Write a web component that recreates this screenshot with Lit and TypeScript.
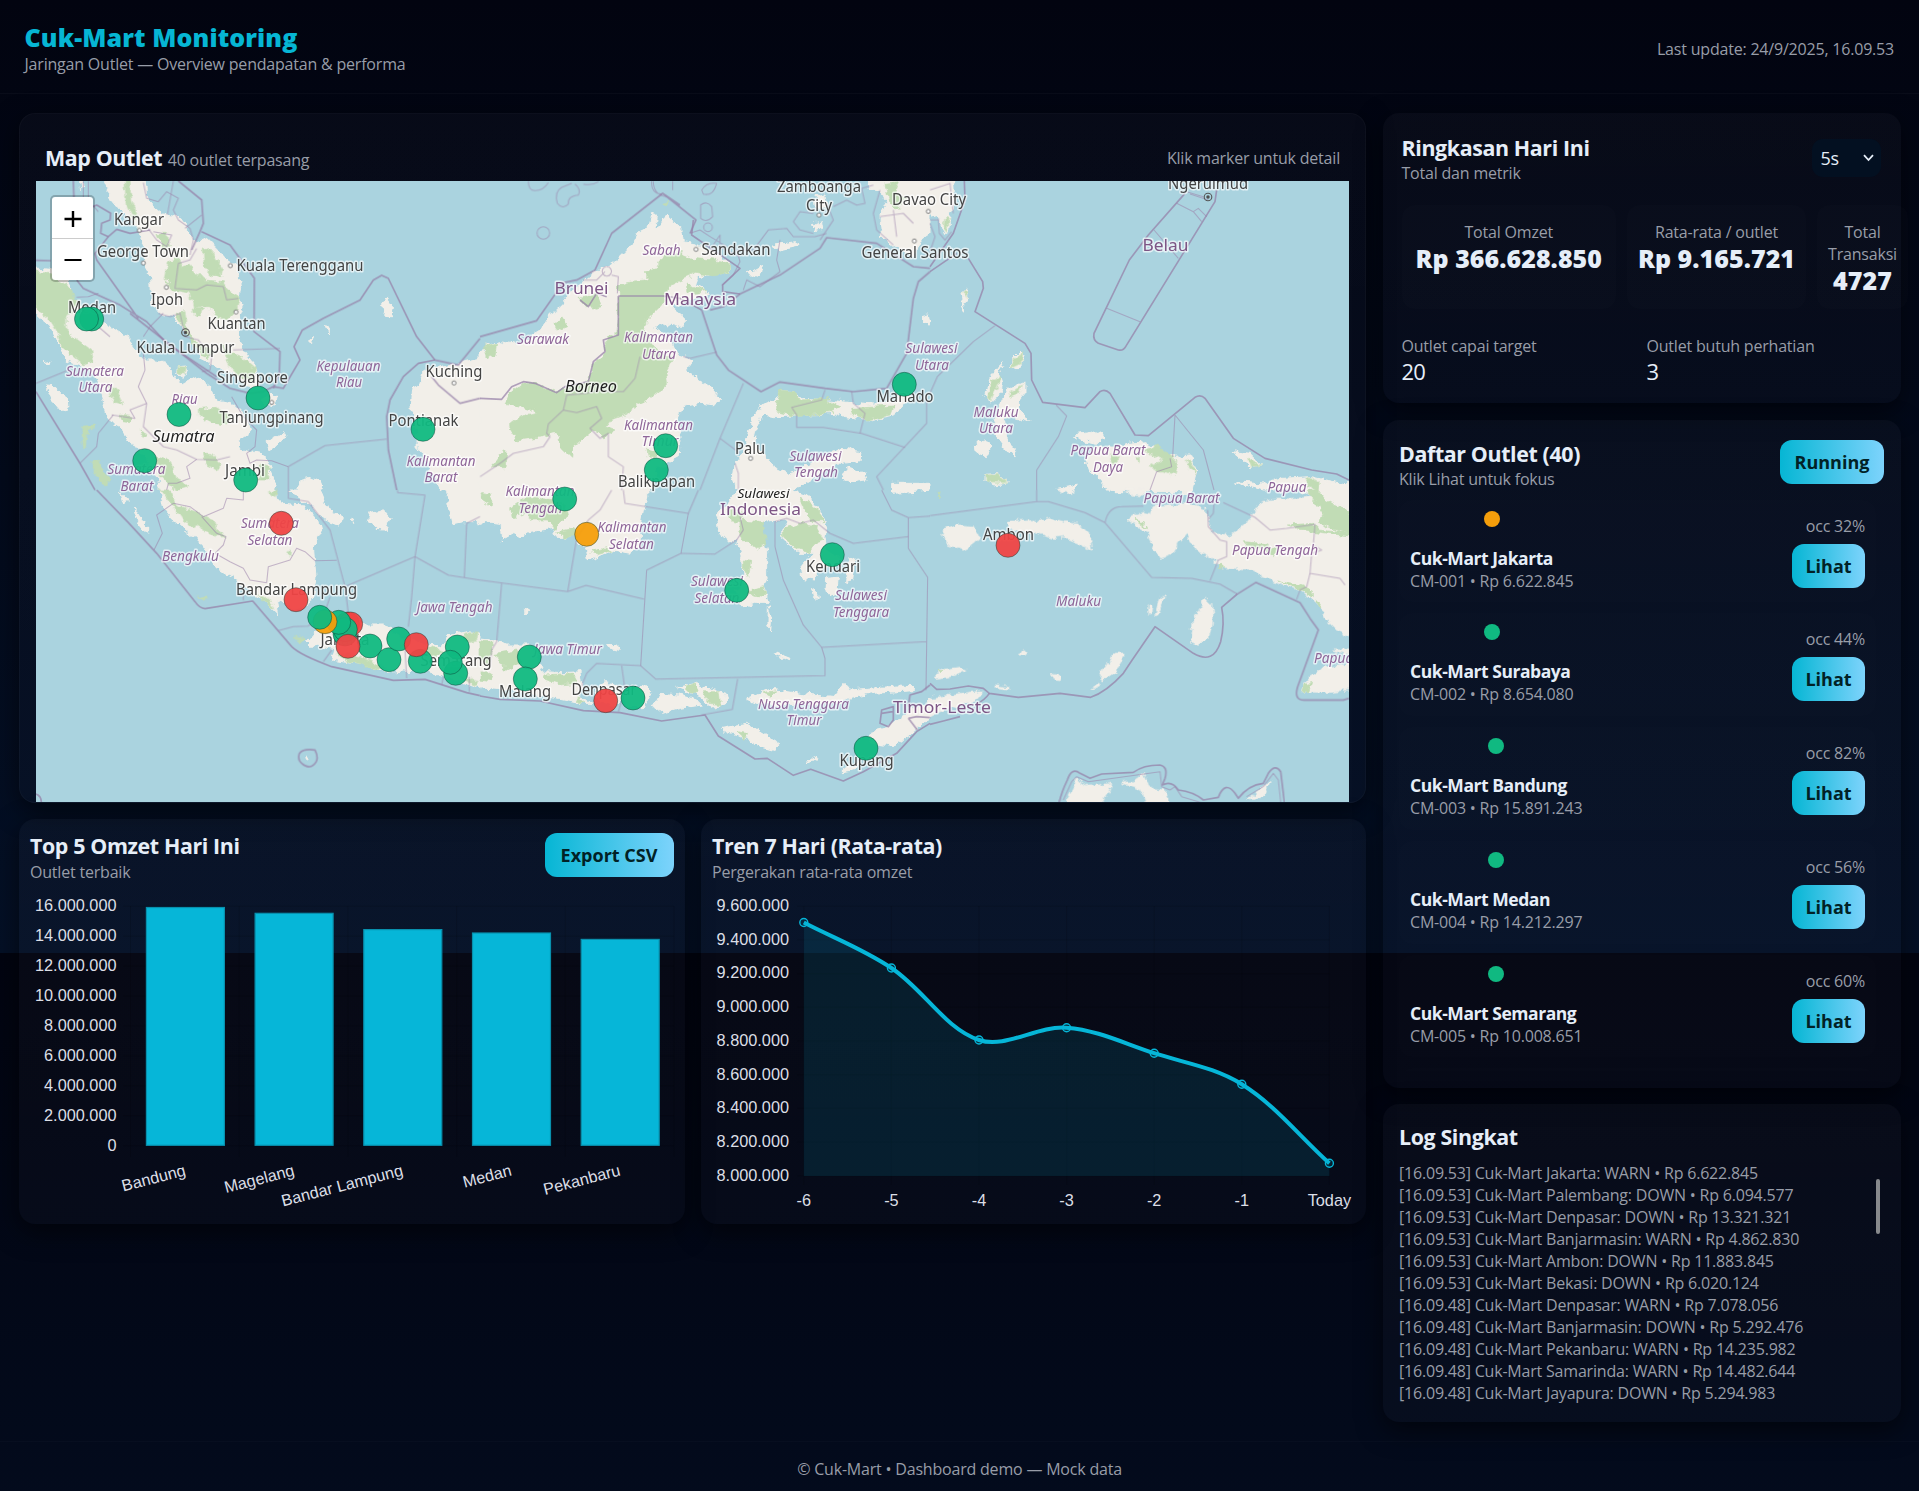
import { LitElement, html, svg, css } from "lit";
import { customElement } from "lit/decorators.js";
import { styleMap } from "lit/directives/style-map.js";

type Pt = [number, number];
type Label = [string, number, number, number, string];

/* Map sheets: each is drawn on its own 3x grid and placed at (x, y). */
interface Sheet {
  x: number;
  y: number;
  land: string[];
  green: string[];
  thin: string[];
  thick: string[];
  towns: Pt[];
}

const SHEETS: Sheet[] = [
  {
    x: 30, y: 170,
    land: [
      "M215,20 L345,20 350,75 370,110 400,135 450,140 465,160 470,185 500,215 530,205 560,235 590,270 620,290 632,350 628,390 640,425 630,450 628,500 640,540 670,580 688,630 680,655 650,650 600,605 560,590 520,570 490,515 460,480 430,440 385,430 365,395 362,320 345,290 340,220 325,180 300,150 270,120 245,90Z",
      "M148,33 L160,33 162,52 152,56Z",
      "M0,293 L60,298 95,312 125,350 122,380 180,430 220,460 260,482 300,505 310,530 340,570 380,570 410,578 430,612 455,645 500,620 540,652 560,690 605,700 655,750 662,785 622,812 640,840 700,852 715,880 735,930 735,960 395,960 385,930 350,870 300,810 270,770 235,750 215,680 205,620 150,585 110,570 90,530 60,470 0,415Z",
      "M445,590 L465,588 472,605 460,622 443,612Z",
      "M48,648 L75,650 112,690 114,720 95,725 65,690Z",
      "M40,578 L60,574 55,588 Z",
      "M690,690 L720,670 742,680 735,710 705,705Z",
      "M708,815 L765,785 768,800 735,830 718,842Z",
      "M810,930 L840,922 870,935 880,960 805,960Z",
      "M1055,400 L1075,388 1090,412 1086,440 1070,440 1058,425Z",
      "M838,505 L850,498 845,518Z",
      "M885,470 L898,472 893,492Z",
      "M1180,600 L1205,620 1240,655 1290,700 1350,690 1350,960 1235,960 1200,900 1180,850 1158,830 1160,750 1140,715 1145,655 1168,645Z",
      "M1185,600 L1350,565 1350,690 1290,700 1240,655Z",
    ],
    green: [
      "M0,300 L58,308 82,330 128,360 140,400 110,440 115,490 185,540 190,575 160,585 130,560 95,530 85,490 60,450 0,400Z",
      "M285,25 L300,25 302,90 325,140 312,150 288,100Z",
      "M375,190 L412,190 418,230 400,235Z",
      "M415,275 L445,262 455,290 480,285 520,330 580,335 590,360 630,380 620,420 590,450 560,440 540,410 490,410 480,370 430,360 405,330Z",
      "M520,240 L545,235 560,270 580,300 575,320 545,315 522,285Z",
      "M435,430 L465,425 475,490 545,550 540,570 515,550 480,510Z",
      "M490,410 L520,415 512,440 494,440Z",
      "M575,520 L600,545 635,560 680,600 665,635 620,615 590,570Z",
      "M508,715 L560,712 602,735 590,765 540,758 510,740Z",
      "M235,640 L265,670 278,705 255,700Z",
      "M380,860 L425,875 440,930 480,950 440,960 395,930Z",
      "M520,850 L545,850 572,880 560,900 530,885Z",
      "M690,885 L718,895 715,930 690,930Z",
      "M185,875 L205,870 240,930 230,945 210,935Z",
      "M155,772 L200,768 175,785 170,825 160,830Z",
      "M445,590 L468,592 465,612 448,610Z",
      "M330,780 L350,790 340,805Z",
      "M270,735 L305,740 300,755 278,752Z",
    ],
    thin: [
      "M175,33 V90 L205,125 M160,33 V90 M18,640 L115,600 M150,880 L200,830 205,790 250,735",
      "M430,33 L412,135 M515,135 L465,175 M140,382 L175,380 205,370",
      "M340,38 L350,85 385,95 410,65 445,85 430,120 445,150 480,175 490,210 480,255",
      "M350,170 L380,210 410,230 425,195 370,185",
      "M445,280 L480,270 500,235 M445,280 L435,355 500,360 530,345 580,350 590,390 625,385",
      "M385,430 L420,440 450,430 465,500 505,510 545,560 540,600 515,605",
      "M610,540 L750,535 M340,550 L345,600 325,650 350,700 300,720 315,745 245,735",
      "M350,700 L340,770 400,830 440,840 500,868 560,870 600,860",
      "M605,680 L640,740 680,780 675,830 650,850 660,880 680,870 725,872 775,890",
      "M775,890 L885,827 1070,807 M775,890 V960",
      "M500,868 L470,890 480,925 440,940 415,940 410,960",
      "M205,470 L240,500 M340,500 L360,470 400,430",
    ],
    thick: [
      "M130,33 L132,90 155,125 200,105 242,130 240,150 215,160 212,190 235,200 260,178 300,190 360,180",
      "M235,200 L195,250 200,270 325,445 M18,271 L62,272 M140,330 L160,355 270,405 350,455 410,520 560,620",
      "M18,665 L150,880 195,960",
      "M445,33 L515,90 520,160 510,185 485,240 M515,185 L600,225 673,325 672,485 750,545 748,610 730,655",
      "M300,430 L530,610 600,655 660,670 700,665 730,650 760,655 810,570 792,530 817,480 880,445 990,390 1010,360 1030,330 1055,316 1075,325 1160,500 1215,570",
      "M1215,570 L1165,580 1120,620 1080,690 1070,740 1075,840 1100,960",
      "M1215,570 L1285,585 1350,505 M1205,620 L1225,645 1290,700 1350,685",
    ],
    towns: [[328, 181], [340, 279], [601, 287], [409, 352], [618, 426], [725, 697], [1272, 639]],
  },
  {
    x: 480, y: 170,
    land: [
      "M0,565 L0,550 20,525 60,515 120,525 170,490 210,440 250,400 290,350 340,310 400,280 430,250 460,220 480,180 510,165 515,130 530,135 525,170 545,160 560,130 575,160 605,175 610,215 640,220 700,245 752,280 750,310 700,312 655,320 650,345 685,370 650,382 620,395 570,410 600,430 620,450 600,470 560,460 520,475 570,500 590,550 625,560 640,570 620,600 650,625 690,650 725,690 710,705 660,700 610,710 590,760 600,800 598,860 560,880 530,900 510,960 0,960Z",
      "M775,960 L760,920 765,880 790,850 800,810 815,750 850,700 890,685 905,662 940,665 970,685 1050,690 1120,700 1180,705 1250,690 1270,670 1290,680 1270,710 1240,735 1170,750 1100,740 1060,730 950,738 880,740 850,735 830,770 820,820 850,850 880,890 920,910 960,900 1010,870 1050,850 1090,838 1143,845 1140,875 1080,880 1030,905 980,935 940,960Z",
      "M1085,905 L1110,895 1155,910 1160,930 1120,935 1095,925Z",
      "M1235,940 L1350,940 1350,960 1235,960Z",
      "M1155,20 L1350,20 1350,190 1320,210 1300,260 1240,230 1205,200 1200,140 1220,100 1200,60 1170,55Z",
      "M995,165 L1025,155 1028,175 1005,182Z",
      "M880,225 L950,215 955,228 900,240Z",
      "M805,310 L850,285 848,300 815,322Z",
      "M1005,80 L1035,75 1040,110 1010,115Z",
      "M1325,440 L1345,435 1350,465 1335,460Z",
    ],
    green: [
      "M415,355 L440,335 500,330 500,305 530,295 545,260 600,250 640,265 700,270 752,285 750,308 700,318 650,310 600,330 570,345 555,380 540,410 500,450 490,480 530,540 580,570 555,610 560,650 520,680 480,700 440,730 400,745 380,770 405,780 370,800 340,780 280,830 275,865 240,830 230,790 190,800 110,810 85,770 120,740 175,725 130,710 75,700 90,670 130,637 165,640 230,668 250,655 325,635 345,570 375,545 370,510 410,495 415,440Z",
      "M300,385 L350,370 365,410 345,415 320,408Z",
      "M220,460 L245,445 260,470 235,480Z",
      "M35,890 L70,840 80,850 75,890Z",
      "M620,345 L680,365 650,370 620,362Z",
      "M10,530 L50,520 45,555 20,565Z",
      "M900,660 L945,665 960,690 1040,685 1082,710 1040,730 950,740 890,725 890,700Z",
      "M1115,715 L1240,708 1230,735 1160,750 1120,735Z",
      "M1215,40 L1255,35 1245,65 1280,85 1250,120 1225,90Z",
      "M545,100 L570,95 560,110Z",
      "M500,840 L535,850 525,865 505,860Z",
    ],
    thin: [
      "M145,33 Q145,62 165,62 Q190,62 205,38 M285,42 Q305,60 295,75 Q262,78 265,102 Q248,120 232,100 Q222,65 245,52 L275,40 M310,42 Q335,48 355,35",
      "M171,189 a19,19 0 1 0 38,0 a19,19 0 1 0 -38,0",
      "M520,33 Q520,75 560,80 M515,33 Q512,70 545,72 M578,33 V60 M665,60 Q680,35 710,40 Q700,80 670,72Z",
      "M662,105 Q680,90 695,110 L698,140 Q680,160 662,145Z M671,172 a13,13 0 1 0 26,0 a13,13 0 1 0 -26,0",
      "M630,190 L660,180 690,200 740,230 M700,225 L720,195 720,230 780,260",
      "M725,345 L760,315 780,275 770,240 820,240 865,180 920,175 940,200 1005,200 1040,190 M790,360 L800,330 840,350 900,305 890,270 900,210",
      "M1040,100 L1060,150 1020,210 M1000,130 L960,125 940,155 960,180 1000,190",
      "M1180,45 L1145,55 1155,100 1130,105 1100,90 1060,110",
      "M1200,60 L1180,130 1190,180 1240,225 M1200,140 L1270,130 1300,160 M1240,120 L1250,200",
      "M395,315 L415,320 412,370 M310,330 L350,330 375,305 M380,290 a14,14 0 1 0 1,0",
      "M610,560 L630,565 710,546 M480,560 L465,625 430,665 390,665 360,660 320,670 260,675 250,720 205,762 200,790 210,800 190,830 100,850 60,880 0,920",
      "M250,720 L290,728 350,710 365,745 330,775 360,805 385,790 385,860 430,890 425,960",
      "M790,640 L720,805 660,960 M720,805 L780,850 M1035,660 L1025,690 935,712 950,735 950,772 1030,772 1145,790 1275,832",
      "M1115,665 L1120,700 1155,730 1140,790 M1340,690 V760 L1190,920 1210,960",
      "M775,960 V910 L765,880",
    ],
    thick: [
      "M0,500 L170,452 250,338 290,330 345,300 395,190 548,70 648,150 630,190 M548,70 L600,105",
      "M415,378 H550 L600,385 665,420 M415,378 V495 L370,510 375,545 340,575 325,635 M0,685 L65,688 95,650 130,635 165,640 230,668 255,650 325,635",
      "M665,420 L710,555 745,600 843,665 900,636 1035,655 1120,665 1220,655 1280,550 1300,385 1315,335 1350,305",
      "M690,420 L730,410 780,372 900,315 1020,235 1040,203 1190,220 1300,290 1350,295",
      "M640,150 L635,195 780,295 728,345 728,365 780,372 M300,390 L325,410 350,370 380,380",
    ],
    towns: [[648, 238], [812, 865], [1017, 135], [1303, 213], [1345, 124]],
  },
  {
    x: 930, y: 170,
    land: [
      "M0,20 L70,20 75,100 60,140 55,190 45,195 30,150 0,130Z",
      "M245,565 L270,540 285,560 265,600 245,590Z",
      "M185,615 L220,575 205,600 218,640 210,670 180,700 165,670Z",
      "M215,690 L230,660 285,635 285,670 260,700 300,755 250,740 220,745 230,800 260,860 230,840 200,800 190,760Z",
      "M138,815 L160,808 185,825 170,860 142,850Z",
      "M165,910 L200,908 235,938 195,945 165,930Z",
      "M430,795 L490,785 528,800 500,820 450,810Z",
      "M465,870 L500,830 560,835 600,820 650,815 720,860 780,855 800,900 785,965 540,965 500,920 475,900Z",
      "M905,845 L960,850 995,885 960,890 930,865Z",
      "M910,935 L1000,942 1060,925 1140,920 1275,948 1275,960 1000,960Z",
      "M380,955 L445,942 430,960 385,960Z",
      "M95,365 L110,360 115,385 95,410 105,430Z",
    ],
    green: [
      "M45,140 L55,140 50,190 42,170Z",
      "M98,365 L112,365 110,385Z",
      "M245,570 L278,545 275,580 250,592Z",
      "M185,630 L215,620 180,695 172,685Z",
      "M240,670 L280,645 270,670 245,685Z",
      "M165,912 L200,910 232,938 170,935Z",
      "M640,840 L685,828 725,860 745,880 735,915 690,905 660,890 700,870Z",
      "M765,870 L790,880 798,915Z",
      "M540,855 L565,860 560,880 540,875Z",
      "M955,865 L995,885 965,890Z",
      "M1135,920 L1168,935 1165,960 1130,950Z",
      "M620,865 L632,868 630,878Z",
    ],
    thin: [
      "M0,60 L60,40 70,130 M0,160 L15,200 0,245 M25,145 L28,190 45,210 65,185 M0,150 L25,150",
      "M130,515 L22,620 0,670 M130,515 L195,467",
      "M378,705 L410,738 385,800 320,900 V960",
      "M530,415 L630,455 M672,180 L745,265 M740,100 L790,125 815,155 M790,125 L805,115 830,140 M770,65 L820,80 M780,72 L835,90",
      "M735,735 L728,860 M735,735 L820,840 852,960",
      "M660,960 L680,905 725,890 720,865",
    ],
    thick: [
      "M103,33 L105,90 70,190 0,290 M115,265 L158,335 160,355 135,425 285,520 303,550 305,630 338,697 465,713 510,665 Q525,655 540,670 L615,795 655,797 795,682 Q812,672 825,685 L910,805 1005,865 1145,900 1220,912 1257,930",
      "M765,70 L655,195 598,270 492,490 Q488,510 505,520 L565,540 Q580,543 587,530 L855,95 860,60",
      "M0,305 L80,250",
    ],
    towns: [],
  },
  {
    x: 30, y: 490,
    land: [
      "M390,0 L735,0 740,30 760,40 820,45 870,100 875,120 850,170 858,260 850,330 820,350 790,360 740,330 745,375 700,330 650,300 620,270 560,235 520,170 490,140 430,90 400,50Z",
      "M775,0 L870,0 890,50 940,80 930,110 880,90 850,50 800,20Z",
      "M1020,70 L1060,62 1080,85 1065,120 1035,118 1015,95Z",
      "M960,95 l10,-5 l2,10z",
      "M270,10 L295,35 280,40Z",
      "M310,55 L350,105 350,130 325,100Z",
      "M1250,0 L1350,0 1350,95 1300,95 1268,102 1255,50Z",
      "M830,455 L860,420 880,390 960,380 1010,405 1060,405 1110,440 1230,470 1260,435 1310,425 1350,430 1350,595 1270,570 1200,545 1120,540 1060,545 1000,525 905,510 915,475 840,465Z",
      "M830,798 L843,803 832,808Z",
    ],
    green: [
      "M390,0 L420,0 440,45 500,65 560,100 565,125 590,140 555,140 500,110 460,95 430,50Z",
      "M505,318 L530,322 520,335Z",
      "M680,310 L715,325 735,360 700,335Z",
      "M770,180 L785,178 782,198Z",
      "M715,5 L745,0 735,20Z",
      "M795,440 L830,450 815,460Z",
      "M920,490 L990,500 1080,540 1040,538 950,515Z",
      "M1300,430 L1345,425 1340,450 1310,455Z",
      "M1180,470 L1240,480 1220,500 1180,490Z",
      "M1290,560 L1345,575 1340,590Z",
    ],
    thin: [
      "M430,40 L380,75 397,130 372,180 M430,40 L480,50 520,80 580,55 590,25 640,30 640,0",
      "M515,80 L560,130 588,140 580,165 555,190 600,215 640,235 660,270 710,278 M710,278 L715,230 780,210 800,175 825,185 855,212 920,211",
      "M775,0 V25 L835,35 900,120 945,290 955,370 M945,290 L1155,200 1255,255 1350,270 M1155,200 L1185,15 1103,8 V0",
      "M1155,200 L1145,320 1135,410 M1303,262 L1310,100 1350,80",
      "M640,330 L640,315 M745,422 L790,410 835,408 890,350 900,320 M880,515 L905,480",
      "M1125,480 L1130,565 M1235,585 L1240,560 M1318,605 V560",
    ],
    thick: [
      "M200,0 L295,98 380,190 495,335 Q508,355 525,356 L668,333 785,470 Q810,495 905,530 L1090,571 1185,568 1310,608 1350,617",
      "M808,790 Q820,775 855,780 Q870,810 850,825 Q835,838 815,820 Q802,810 808,790Z",
      "M18,912 Q34,918 34,936",
    ],
    towns: [],
  },
  {
    x: 480, y: 490,
    land: [
      "M0,0 L505,0 500,40 490,60 482,110 480,170 450,190 400,180 360,197 325,210 320,180 300,160 285,130 255,145 230,145 220,115 150,125 120,140 100,130 65,150 60,100 20,95 0,100Z",
      "M770,0 L930,0 985,20 1010,55 1042,100 1035,140 1040,180 1085,200 1060,230 1010,240 1005,270 965,265 962,235 1000,190 960,190 910,150 905,120 930,90 870,92 845,95 850,150 860,180 860,260 850,290 865,340 830,340 790,350 770,300 790,280 785,200 770,150 745,155 720,130 712,80 740,40Z",
      "M1040,265 L1075,262 1070,310 1050,320 1038,300Z",
      "M995,300 L1008,298 1012,328 1000,325Z",
      "M865,350 L875,385 872,420 864,400Z",
      "M0,450 L40,455 80,465 150,465 190,545 250,548 300,545 305,580 295,620 340,640 300,640 200,620 100,600 0,590Z",
      "M340,600 L375,578 420,590 425,625 400,650 350,630Z",
      "M425,600 L500,590 515,605 495,650 440,650Z",
      "M520,650 L540,610 600,615 650,630 665,645 600,655 545,670Z",
      "M590,592 L640,582 735,610 740,635 700,655 660,620Z",
      "M800,625 L870,598 960,610 1080,625 1080,640 850,645Z",
      "M1060,620 L1095,580 1110,600 1250,588 1300,590 1300,602 1180,610 1080,630Z",
      "M725,712 L800,700 850,730 900,762 885,782 840,770 800,745 740,730Z",
      "M1165,740 L1180,720 1220,710 1300,655 1350,640 1350,680 1290,735 1240,770 1180,760Z",
      "M980,815 L1000,800 1010,805 985,820Z",
      "M1090,835 L1140,820 1120,840 1090,845Z",
      "M380,462 L410,468 415,478 385,470Z",
      "M880,485 L930,505 925,512 885,492Z",
      "M130,362 l12,-5 l4,8 l-10,6z",
      "M1105,210 L1125,205 1118,270 1100,280Z",
      "M1230,0 L1350,0 1240,10Z",
    ],
    green: [
      "M95,50 L140,20 220,30 260,50 265,75 240,95 225,120 200,90 150,90 140,70 100,80Z",
      "M5,10 L35,15 30,50 10,40Z",
      "M230,125 L285,115 290,135 250,145Z",
      "M330,185 L380,170 400,180 350,195Z",
      "M780,90 L850,95 860,160 830,175 790,150 780,120Z",
      "M740,60 L790,70 780,95 750,90Z",
      "M910,115 L960,100 1010,110 1030,150 1000,160 990,190 940,170 910,140Z",
      "M960,20 L1000,50 1035,95 1000,95 975,60Z",
      "M790,210 L815,215 810,260 790,250Z M800,300 L850,290 855,320 820,315Z",
      "M45,490 L110,480 120,520 80,540 60,520Z",
      "M0,455 L40,460 30,520 0,515Z",
      "M190,555 L280,550 295,580 240,585 195,570Z",
      "M615,590 L640,582 655,600 640,615Z M670,605 L720,605 725,645 690,640Z",
      "M850,610 L890,605 880,620Z",
      "M770,725 L800,730 795,748Z",
      "M0,540 L40,555 30,575 0,570Z",
      "M290,620 L315,640 300,640Z",
    ],
    thin: [
      "M395,0 L360,60 325,90 290,145 263,305 M263,305 L0,270 M263,305 L318,286 492,327 M430,0 L435,40 625,70 655,0",
      "M625,70 L603,190 500,240 482,527 527,567 1035,557 V505 L1025,472 970,405 910,270 885,170 V95 L920,85 960,100 1000,90 1050,130 1120,160 1285,140",
      "M603,190 L705,192 770,150 790,120 780,80 M1025,472 L1340,455 M1205,0 L1235,60 1285,83 V175 L1343,262 1338,600 M1285,83 L1350,78",
      "M65,280 L50,455 35,480 30,530",
      "M482,527 L350,520 320,550 300,600 M425,527 L435,600 415,665 M773,567 L757,658 665,675",
    ],
    thick: [
      "M0,618 L60,628 180,633 310,662 420,668 545,693 675,675 715,738 825,807 862,805 940,856 992,838 1090,873 1150,845 1250,790 1310,725 1350,700",
      "M1205,660 L1240,650 1240,690 1225,710 1200,700Z M1205,670 L1238,665",
      "M1350,585 L1325,605 1290,615 1285,650 M1285,685 L1310,680 1350,683 M1285,685 L1312,720",
    ],
    towns: [],
  },
  {
    x: 930, y: 490,
    land: [
      "M35,120 L80,108 130,112 150,150 130,165 100,180 55,165Z",
      "M232,95 L310,88 320,98 355,83 400,95 445,100 475,130 485,180 450,160 400,140 370,145 300,125 235,120Z",
      "M590,85 L640,70 660,75 670,50 720,45 790,45 825,55 840,100 850,130 900,140 950,100 990,40 1020,30 1170,20 1275,35 1275,448 1220,420 1190,390 1160,340 1110,300 1030,275 960,240 880,235 840,200 800,180 770,130 740,165 730,190 690,205 670,170 655,130 620,110Z",
      "M1180,30 L1080,-15 1275,-20 1275,60Z",
      "M585,0 L650,0 635,18 610,15Z",
      "M825,325 L845,345 850,395 840,440 800,465 785,460 790,385 810,365Z",
      "M655,345 L665,345 662,378 653,370Z M690,325 L702,318 685,370 675,375Z",
      "M510,550 L555,490 585,490 560,540 520,570Z",
      "M480,600 L510,578 505,590Z",
      "M370,550 L390,555 388,572 368,570Z",
      "M268,488 l12,-6 l5,8 l-8,7z",
      "M15,565 L30,540 90,532 110,540 60,560Z",
      "M195,585 L240,590 235,597 200,592Z",
      "M0,625 L100,610 155,603 140,625 70,650 20,670 0,680Z",
      "M1117,605 L1130,570 1180,530 1275,520 1275,600 1200,607Z",
      "M410,955 L410,925 440,870 470,890 545,880 540,900 500,955Z",
      "M575,880 L610,875 640,850 660,895 700,900 725,955 655,955 640,905Z",
      "M950,930 L990,900 1025,870 1000,910 970,928Z",
      "M385,0 L430,0 425,10 395,8Z",
      "M1205,480 L1275,480 1275,500Z",
    ],
    green: [
      "M1135,5 L1160,-5 1190,30 1275,80 1275,134 1200,115 1165,100 1180,70Z",
      "M1075,105 L1150,100 1160,120 1275,130 1275,140 1180,128 1110,118Z",
      "M940,155 L1000,160 1040,180 1030,200 1000,175 950,170Z",
      "M1040,270 L1110,285 1150,300 1150,320 1100,295Z",
      "M1155,330 L1172,340 1168,360Z",
      "M615,88 L640,95 650,115Z",
      "M1125,585 L1145,580 1135,608 1118,605Z",
      "M870,222 L885,235 860,232Z",
      "M22,540 L40,542 30,552Z",
      "M25,5 L32,30 25,25Z",
    ],
    thin: [
      "M0,77 L320,35 355,35 465,68 525,98 665,262 785,265 870,282 922,312 M320,35 V0 M525,98 Q535,50 575,50 L640,48",
      "M880,38 L975,82 1020,120 1070,115 1155,103 1150,165 1175,180 1145,190 1140,250 1230,265 1245,285",
      "M833,60 L835,110 870,150 890,155 890,200 865,210 840,272 M852,40 L850,70 833,90",
      "M1140,250 L1130,290 1110,300 1100,328",
      "M400,930 L425,875 440,860 475,875 690,845 695,890 720,900 735,890 755,920 820,940 M950,920 L1000,890 1030,850 1045,870 1052,936",
    ],
    thick: [
      "M922,312 L978,277 1110,338 1140,385 1165,420 1103,590 Q1090,632 1125,630 L1240,630 1257,625",
      "M922,312 L875,352 Q885,400 872,455 Q850,525 790,490 L675,410 605,512 580,550 Q530,605 482,622 L390,610 265,622 178,610 160,595 115,588 60,597 20,598 0,580",
      "M178,610 Q165,630 135,645 M0,703 L40,693 90,680",
      "M388,936 Q395,905 412,870 Q425,830 450,850 L480,865 515,852 610,847 Q640,825 690,825 Q715,830 705,865 L697,885 Q725,870 745,900 Q790,905 820,930 L865,922 Q885,870 915,910 L925,925 Q955,885 1000,880 L1015,850 Q1035,820 1052,845 L1063,936",
    ],
    towns: [],
  },
];

/* text, centre x, baseline y, width, kind */
const LABELS: Label[] = [
  ["Kangar", 139, 225, 50, "city"], ["George Town", 143, 257, 92, "city"],
  ["Kuala Terengganu", 300, 271, 127, "city"], ["Ipoh", 167, 305, 32, "city"],
  ["Kuantan", 236.5, 329, 58, "city"], ["Kuala Lumpur", 185.5, 353, 98, "city"],
  ["Medan", 92, 313, 48, "city"], ["Singapore", 252.5, 383, 71, "city"],
  ["Tanjungpinang", 271.5, 422.5, 104, "city"], ["Kuching", 454, 377, 57, "city"],
  ["Pontianak", 423.5, 426, 70, "city"], ["Jambi", 245, 476, 40, "city"],
  ["Sandakan", 736, 255, 69, "city"], ["Zamboanga", 819, 192, 84, "city"],
  ["City", 819, 211, 26, "city"], ["Davao City", 929, 205, 74, "city"],
  ["General Santos", 915, 258, 107, "city"], ["Ngerulmud", 1208, 189, 80, "city"],
  ["Manado", 905, 402, 57, "city"], ["Palu", 750, 454, 30, "city"],
  ["Balikpapan", 656.5, 487, 77, "city"], ["Ambon", 1008.5, 540, 51, "city"],
  ["Kendari", 833, 572, 54, "city"], ["Kupang", 866.5, 766, 54, "city"],
  ["Bandar Lampung", 296.5, 595, 121, "city"], ["Jakarta", 345, 645, 49, "city"],
  ["Semarang", 456, 666, 71, "city"], ["Malang", 525, 697, 52, "city"],
  ["Denpasar", 604, 695, 65, "city"],
  ["Sumatra", 183.5, 441.5, 62, "island"], ["Borneo", 591, 392, 52, "island"],
  ["Sulawesi", 763.5, 498, 52, "islet"],
  ["Brunei", 581.5, 294, 54, "country"], ["Malaysia", 700, 305, 72, "country"],
  ["Belau", 1165.5, 250.5, 46, "country"], ["Indonesia", 760.5, 514.5, 81, "country"],
  ["Timor-Leste", 942, 713, 98, "country"],
  ["Sumatera", 95, 375.5, 58, "prov"], ["Utara", 95.5, 392, 34, "prov"],
  ["Riau", 184.5, 403.5, 26, "prov"], ["Kepulauan", 348.5, 371, 64, "prov"],
  ["Riau", 349, 387, 26, "prov"], ["Sumatera", 136.5, 474, 58, "prov"],
  ["Barat", 137, 490.5, 33, "prov"], ["Kalimantan", 441, 465.5, 69, "prov"],
  ["Barat", 441, 482, 33, "prov"], ["Sabah", 661.5, 255, 38, "prov"],
  ["Sarawak", 543, 344, 52, "prov"], ["Kalimantan", 658.5, 342, 69, "prov"],
  ["Utara", 659, 358.5, 34, "prov"], ["Kalimantan", 658.5, 429.5, 69, "prov"],
  ["Timur", 660, 446, 37, "prov"], ["Kalimantan", 540, 496, 69, "prov"],
  ["Tengah", 540.5, 512.5, 44, "prov"], ["Kalimantan", 632, 532, 69, "prov"],
  ["Selatan", 631.5, 548.5, 45, "prov"], ["Sumatera", 270, 528, 58, "prov"],
  ["Selatan", 270, 544.5, 45, "prov"], ["Bengkulu", 190.5, 561, 57, "prov"],
  ["Jawa Tengah", 454.5, 612, 76, "prov"], ["Jawa Timur", 568, 654, 68, "prov"],
  ["Sulawesi", 931.5, 353, 52, "prov"], ["Utara", 932, 369.5, 34, "prov"],
  ["Sulawesi", 815.5, 460.5, 52, "prov"], ["Tengah", 816, 477, 44, "prov"],
  ["Sulawesi", 717, 586, 52, "prov"], ["Selatan", 717, 602.5, 45, "prov"],
  ["Sulawesi", 861, 600, 52, "prov"], ["Tenggara", 861, 616.5, 56, "prov"],
  ["Maluku", 996, 416.5, 45, "prov"], ["Utara", 996, 433, 34, "prov"],
  ["Papua Barat", 1108, 455, 75, "prov"], ["Daya", 1108, 471.5, 30, "prov"],
  ["Papua", 1287, 491.5, 39, "prov"], ["Papua Barat", 1181.5, 503, 76, "prov"],
  ["Papua Tengah", 1275, 555, 86, "prov"], ["Maluku", 1078.5, 606, 45, "prov"],
  ["Papua Selatan", 1358, 663, 88, "prov"],
  ["Nusa Tenggara", 803.5, 708.5, 91, "prov"], ["Timur", 804, 725, 35, "prov"],
  ["Aceh", 22, 486, 36, "prov"],
];

const OK = "#10b981";
const WARN = "#f59e0b";
const DOWN = "#ef4444";

const MARKERS: [number, number, string][] = [
  [91.7, 319, OK], [86.5, 319, OK], [179, 414.5, OK], [144.7, 460.7, OK], [245.7, 480, OK],
  [258, 398, OK], [423, 429.3, OK], [665.7, 445.7, OK], [656.3, 470, OK], [904.3, 384.3, OK],
  [564.7, 499, OK], [586.7, 534.3, WARN], [832.3, 554.7, OK], [736.7, 590.3, OK],
  [529.3, 657, OK], [525.3, 679, OK], [605.7, 700.7, DOWN], [633, 698, OK], [866, 748.3, OK],
  [1008, 545.3, DOWN], [281.3, 523.3, DOWN], [296, 599.7, DOWN],
  [345, 634, OK], [347.5, 624, DOWN], [350.7, 624, DOWN], [345.3, 629.5, OK], [338.7, 622.3, OK],
  [325, 621.7, WARN], [319.7, 617.3, OK], [370, 646, OK], [348, 646.3, DOWN], [389, 659.7, OK],
  [398.7, 639, OK], [420.3, 661.3, OK], [416.3, 644.7, DOWN],
  [457.3, 647, OK], [455.7, 673.3, OK], [450.3, 662.3, OK],
];

@customElement("outlet-map")
class OutletMap extends LitElement {
  static styles = css`
    :host { display: block; position: relative; width: 1313px; height: 621px; background: #aad3df; overflow: hidden; }
    svg { display: block; }
    .land { fill: #f2efe9; stroke: #f2efe9; stroke-width: 3; stroke-linejoin: round; }
    .green { fill: #c1dcb5; stroke: #c1dcb5; stroke-width: 2; stroke-linejoin: round; }
    .thin { fill: none; stroke: #9d83ab; stroke-width: 3.2; opacity: 0.55; stroke-linejoin: round; }
    .thick { fill: none; stroke: #957fa8; stroke-width: 5; opacity: 0.72; stroke-linejoin: round; }
    .town { fill: #fff; stroke: #666; stroke-width: 2.6; }
    text { font-family: "Noto Sans", "Open Sans", sans-serif; text-anchor: middle; paint-order: stroke; stroke: rgba(255, 255, 255, 0.66); stroke-width: 3px; stroke-linejoin: round; }
    .city { font-size: 15.5px; fill: #444; }
    .island { font-size: 15.5px; font-style: italic; fill: #222; }
    .islet { font-size: 13px; font-style: italic; fill: #222; }
    .country { font-size: 16.5px; fill: #7d5585; }
    .prov { font-size: 14px; font-style: italic; fill: #8f6699; }
    .marker { stroke: #0d3b33; stroke-width: 0.9; stroke-opacity: 0.5; fill-opacity: 0.95; }
    .zoom { position: absolute; left: 14px; top: 14px; width: 41px; border: 2px solid rgba(0, 0, 0, 0.22); border-radius: 5px; background-clip: padding-box; background-color: #fff; }
    .zoom button { display: flex; align-items: center; justify-content: center; width: 41px; height: 41px; padding: 0; border: 0; background: none; }
    .zoom button:first-child { padding-top: 2px; }
    .zoom button + button { border-top: 1px solid #ccc; height: 42px; }
  `;

  render() {
    return html`
      <svg width="1313" height="621" viewBox="36 181 1313 621">
        <defs>
          <filter id="coast" filterUnits="userSpaceOnUse" x="30" y="170" width="1330" height="640">
            <feTurbulence type="fractalNoise" baseFrequency="0.13" numOctaves="3" seed="7" result="n"></feTurbulence>
            <feDisplacementMap in="SourceGraphic" in2="n" scale="8" xChannelSelector="R" yChannelSelector="G"></feDisplacementMap>
          </filter>
        </defs>
        <g filter="url(#coast)">
          ${SHEETS.map((s) => svg`<g transform="translate(${s.x} ${s.y}) scale(0.33333)">
            ${s.land.map((d) => svg`<path class="land" d=${d}></path>`)}
          </g>`)}
          ${SHEETS.map((s) => svg`<g transform="translate(${s.x} ${s.y}) scale(0.33333)">
            ${s.green.map((d) => svg`<path class="green" d=${d}></path>`)}
          </g>`)}
        </g>
        ${SHEETS.map((s) => svg`<g transform="translate(${s.x} ${s.y}) scale(0.33333)">
          ${s.thin.map((d) => svg`<path class="thin" d=${d}></path>`)}
          ${s.thick.map((d) => svg`<path class="thick" d=${d}></path>`)}
          ${s.towns.map(([x, y]) => svg`<circle class="town" cx=${x} cy=${y} r="6"></circle>`)}
        </g>`)}
        <g fill="none" stroke="#555" stroke-width="1.1">
          <circle cx="185.5" cy="332.5" r="3.8"></circle><circle cx="185.5" cy="332.5" r="1.2" fill="#444"></circle>
          <circle cx="1208" cy="197" r="3.8"></circle><circle cx="1208" cy="197" r="1.2" fill="#444"></circle>
        </g>
        ${LABELS.filter(([t]) => t !== "Aceh").map(([t, x, y, w, k]) => svg`<text class=${k} x=${x} y=${y} textLength=${w} lengthAdjust="spacingAndGlyphs">${t}</text>`)}
        ${MARKERS.map(([x, y, c]) => svg`<circle class="marker" cx=${x} cy=${y} r="12" fill=${c}></circle>`)}
      </svg>
      <div class="zoom">
        <button aria-label="Zoom in"><svg width="18" height="18" viewBox="0 0 18 18"><path d="M.5 9H17.5M9 1V17" stroke="#000" stroke-width="2.4"></path></svg></button>
        <button aria-label="Zoom out"><svg width="18" height="18" viewBox="0 0 18 18"><path d="M.5 9H17.5" stroke="#000" stroke-width="2"></path></svg></button>
      </div>`;
  }
}

const chartText = css`
  :host { display: block; }
  svg { display: block; }
  text { font: 16.3px "Liberation Sans", Arial, sans-serif; fill: #dcdfe6; }
  .grid { stroke: rgba(0, 0, 0, 0.12); stroke-width: 1; fill: none; }
`;

@customElement("bar-chart")
class BarChart extends LitElement {
  static styles = [chartText, css`
    .bar { fill: #06b6d8; stroke: #0890ad; stroke-width: 1.2; }
    .end { text-anchor: end; }
  `];
  private bars: [string, number][] = [
    ["Bandung", 907.5], ["Magelang", 913.3], ["Bandar Lampung", 929.6], ["Medan", 933], ["Pekanbaru", 939.4],
  ];
  render() {
    const ticks = [16, 14, 12, 10, 8, 6, 4, 2, 0];
    return html`<svg width="665" height="336" viewBox="19 888 665 336">
      ${ticks.map((t, i) => svg`
        <path class="grid" d="M123 ${906.2 + i * 29.92}H674"></path>
        <text class="end" x="116.5" y=${911 + i * 29.97}>${t === 0 ? "0" : `${t}.000.000`}</text>`)}
      ${[0, 1, 2, 3, 4, 5].map((i) => svg`<path class="grid" d="M${130.5 + i * 108.7} 906V1157"></path>`)}
      ${this.bars.map(([name, top], i) => svg`
        <rect class="bar" x=${146.4 + i * 108.7} y=${top} width="78" height=${1145.3 - top}></rect>
        <text class="end" transform="translate(${186.5 + i * 108.7} 1175.2) rotate(-14.5)">${name}</text>`)}
    </svg>`;
  }
}

@customElement("trend-chart")
class TrendChart extends LitElement {
  static styles = [chartText, css`
    .line { fill: none; stroke: #06b6d8; stroke-width: 4; stroke-linejoin: round; }
    .area { fill: rgba(6, 182, 212, 0.12); }
    .dot { fill: rgba(6, 182, 212, 0.12); stroke: #06b6d8; stroke-width: 1.4; }
    .end { text-anchor: end; }
    .mid { text-anchor: middle; }
  `];
  private pts: Pt[] = [[803.8, 922.5], [891.4, 968], [979, 1040], [1066.6, 1027.7], [1154.2, 1053.2], [1241.8, 1084.3], [1329.4, 1163.3]];

  /* Smooth curve whose control arms scale with the distance to each neighbour. */
  private curve(tension: number): string {
    const p = this.pts;
    const arms = p.map((c, i) => {
      const a = p[Math.max(i - 1, 0)];
      const b = p[Math.min(i + 1, p.length - 1)];
      const d0 = Math.hypot(c[0] - a[0], c[1] - a[1]);
      const d1 = Math.hypot(b[0] - c[0], b[1] - c[1]);
      const f0 = (tension * d0) / (d0 + d1);
      const f1 = (tension * d1) / (d0 + d1);
      return [c[0] - f0 * (b[0] - a[0]), c[1] - f0 * (b[1] - a[1]), c[0] + f1 * (b[0] - a[0]), c[1] + f1 * (b[1] - a[1])];
    });
    let d = `M${p[0][0]},${p[0][1]}`;
    for (let i = 1; i < p.length; i++) {
      d += `C${arms[i - 1][2]},${arms[i - 1][3]} ${arms[i][0]},${arms[i][1]} ${p[i][0]},${p[i][1]}`;
    }
    return d;
  }

  render() {
    const days = ["-6", "-5", "-4", "-3", "-2", "-1", "Today"];
    const ticks = ["9.600.000", "9.400.000", "9.200.000", "9.000.000", "8.800.000", "8.600.000", "8.400.000", "8.200.000", "8.000.000"];
    const line = this.curve(0.35);
    return html`<svg width="665" height="336" viewBox="701 888 665 336">
      ${ticks.map((t, i) => svg`
        <path class="grid" d="M797 ${906.2 + i * 33.7}H1329.4"></path>
        <text class="end" x="789" y=${911 + i * 33.73}>${t}</text>`)}
      ${this.pts.map(([x], i) => svg`
        <path class="grid" d="M${x} 906V1185"></path>
        <text class="mid" x=${x} y="1205.5">${days[i]}</text>`)}
      <path class="area" d="${line}V1176H803.8Z"></path>
      <path class="line" d=${line}></path>
      ${this.pts.map(([x, y]) => svg`<circle class="dot" cx=${x} cy=${y} r="4"></circle>`)}
    </svg>`;
  }
}

const OUTLETS = [
  { name: "Cuk-Mart Jakarta", meta: "CM-001 • Rp 6.622.845", occ: 32, color: WARN },
  { name: "Cuk-Mart Surabaya", meta: "CM-002 • Rp 8.654.080", occ: 44, color: OK },
  { name: "Cuk-Mart Bandung", meta: "CM-003 • Rp 15.891.243", occ: 82, color: OK },
  { name: "Cuk-Mart Medan", meta: "CM-004 • Rp 14.212.297", occ: 56, color: OK },
  { name: "Cuk-Mart Semarang", meta: "CM-005 • Rp 10.008.651", occ: 60, color: OK },
];

const LOG = [
  "[16.09.53] Cuk-Mart Jakarta: WARN • Rp 6.622.845",
  "[16.09.53] Cuk-Mart Palembang: DOWN • Rp 6.094.577",
  "[16.09.53] Cuk-Mart Denpasar: DOWN • Rp 13.321.321",
  "[16.09.53] Cuk-Mart Banjarmasin: WARN • Rp 4.862.830",
  "[16.09.53] Cuk-Mart Ambon: DOWN • Rp 11.883.845",
  "[16.09.53] Cuk-Mart Bekasi: DOWN • Rp 6.020.124",
  "[16.09.48] Cuk-Mart Denpasar: WARN • Rp 7.078.056",
  "[16.09.48] Cuk-Mart Banjarmasin: DOWN • Rp 5.292.476",
  "[16.09.48] Cuk-Mart Pekanbaru: WARN • Rp 14.235.982",
  "[16.09.48] Cuk-Mart Samarinda: WARN • Rp 14.482.644",
  "[16.09.48] Cuk-Mart Jayapura: DOWN • Rp 5.294.983",
];

@customElement("app-root")
class AppRoot extends LitElement {
  static styles = css`
    :host {
      display: block; box-sizing: border-box; width: 1919px; height: 1491px; overflow: hidden;
      background: linear-gradient(180deg, #020410 0%, #041026 100%) 0 0 / 100% 953px repeat-y;
      color: #e6eef8; font-family: "Open Sans", "Noto Sans", sans-serif;
    }
    * { box-sizing: border-box; }
    .header { display: flex; justify-content: space-between; align-items: flex-start; height: 94px; padding: 21px 25px 0 24.5px; border-bottom: 1px solid rgba(255, 255, 255, 0.03); }
    .brand { font-size: 25px; line-height: 32px; font-weight: 800; color: #06b6d4; letter-spacing: 0.1px; }
    .muted { font-size: 16px; line-height: 22px; color: #989da8; letter-spacing: -0.2px; }
    .update { margin-top: 17px; }
    .title { font-size: 21.4px; line-height: 28px; font-weight: 700; letter-spacing: -0.38px; }
    .main { display: grid; grid-template-columns: 1347px 518px; column-gap: 17px; height: 1347px; padding: 19px 19px 0; align-items: start; }
    .left { display: grid; grid-template-columns: 665.5px 665px; gap: 16px 16.5px; }
    .right { display: flex; flex-direction: column; gap: 16.5px; }
    .card { border-radius: 16px; background: linear-gradient(180deg, rgba(255, 255, 255, 0.025), rgba(255, 255, 255, 0.014)); box-shadow: 0 8px 26px rgba(0, 0, 0, 0.55); }
    .map-card { grid-column: 1 / 3; height: 690px; border: 1px solid rgba(255, 255, 255, 0.03); padding: 0 16px; overflow: hidden; }
    .map-head { display: flex; align-items: baseline; height: 67px; padding: 30px 9px 0; gap: 5.5px; }
    .hint { margin-left: auto; align-self: flex-start; margin-top: 3px; }
    .chart-card { height: 405px; overflow: hidden; }
    .card-head { display: flex; justify-content: space-between; align-items: flex-start; }
    .chart-card .card-head { height: 69px; padding: 13px 11px 0; }
    .btn { flex: none; height: 44px; padding: 0 13px; border: 0; border-radius: 12px; background: linear-gradient(90deg, #06b6d4, #7dd3fc); color: #012226; font: 700 18px/44px "Open Sans", sans-serif; letter-spacing: 0; text-align: center; }
    .export { width: 129px; margin-top: 1px; padding: 0; }
    .chart-card .title { line-height: 28.5px; }
    .summary { height: 290px; padding: 21px 18.5px 0; }
    .select { display: flex; align-items: center; justify-content: space-between; width: 69px; height: 38px; margin: 5px 2px 0 0; padding: 0 7px 0 9px; border-radius: 11px; background: #031021; font-size: 18px; letter-spacing: -0.2px; }
    .kpis { display: flex; gap: 11px; width: 507px; height: 104px; margin-top: 21px; }
    .kpi { width: 214.5px; flex: none; padding: 15.5px 0 0; border-radius: 13px; background: rgba(255, 255, 255, 0.01); text-align: center; white-space: nowrap; }
    .kpi.avg { width: 179px; }
    .kpi.trx { width: 91px; }
    .value { font-size: 25px; line-height: 30px; font-weight: 800; letter-spacing: 0.05px; }
    .counts { display: flex; margin-top: 26px; }
    .count { width: 245px; flex: none; }
    .num { font-size: 22px; line-height: 29px; letter-spacing: -0.9px; }
    .list { height: 668px; padding: 20px 16px 0; }
    .list-head { height: 60px; }
    .list-head .title { line-height: 28px; }
    .running { width: 104px; margin: 0 1px 0 0; padding: 0; }
    .items { display: flex; flex-direction: column; gap: 11px; height: 571px; width: 477px; overflow: hidden; }
    .item { display: flex; justify-content: space-between; flex: none; height: 102.8px; padding: 11px 11px 0; border-radius: 13px; background: rgba(255, 255, 255, 0.008); }
    .who { display: flex; flex-direction: column; }
    .dot { flex: none; align-self: center; width: 16px; height: 16px; border-radius: 50%; }
    .name { margin-top: 19px; font-size: 17.5px; line-height: 24px; font-weight: 700; letter-spacing: -0.45px; }
    .side { display: flex; flex-direction: column; align-items: flex-end; padding-top: 4px; }
    .side .btn { width: 73px; padding: 0; margin-top: 7px; }
    .logs { height: 318px; padding: 19px 16px 0; }
    .log-row { display: flex; justify-content: space-between; margin-top: 10.5px; }
    .thumb { width: 4px; height: 55px; margin: 17px 5px 0 0; border-radius: 2px; background: #87898c; }
    .footer { height: 50px; border-top: 1px solid rgba(255, 255, 255, 0.02); padding-top: 16px; text-align: center; }
  `;

  render() {
    return html`
      <header class="header">
        <div>
          <div class="brand">Cuk-Mart Monitoring</div>
          <div class="muted">Jaringan Outlet — Overview pendapatan &amp; performa</div>
        </div>
        <div class="muted update">Last update: 24/9/2025, 16.09.53</div>
      </header>
      <main class="main">
        <section class="left">
          <div class="card map-card">
            <div class="map-head">
              <span class="title">Map Outlet</span><span class="muted">40 outlet terpasang</span>
              <span class="muted hint">Klik marker untuk detail</span>
            </div>
            <outlet-map></outlet-map>
          </div>
          <div class="card chart-card">
            <div class="card-head">
              <div><div class="title">Top 5 Omzet Hari Ini</div><div class="muted">Outlet terbaik</div></div>
              <button class="btn export">Export CSV</button>
            </div>
            <bar-chart></bar-chart>
          </div>
          <div class="card chart-card">
            <div class="card-head">
              <div><div class="title">Tren 7 Hari (Rata-rata)</div><div class="muted">Pergerakan rata-rata omzet</div></div>
            </div>
            <trend-chart></trend-chart>
          </div>
        </section>
        <aside class="right">
          <div class="card summary">
            <div class="card-head">
              <div><div class="title">Ringkasan Hari Ini</div><div class="muted">Total dan metrik</div></div>
              <div class="select"><span>5s</span>
                <svg width="11" height="8" viewBox="0 0 11 8"><path d="M1 1.2L5.5 6L10 1.2" fill="none" stroke="#e6eef8" stroke-width="1.8"></path></svg>
              </div>
            </div>
            <div class="kpis">
              <div class="kpi"><div class="muted">Total Omzet</div><div class="value">Rp 366.628.850</div></div>
              <div class="kpi avg"><div class="muted">Rata-rata / outlet</div><div class="value">Rp 9.165.721</div></div>
              <div class="kpi trx"><div class="muted">Total<br>Transaksi</div><div class="value">4727</div></div>
            </div>
            <div class="counts">
              <div class="count"><div class="muted">Outlet capai target</div><div class="num">20</div></div>
              <div class="count"><div class="muted">Outlet butuh perhatian</div><div class="num">3</div></div>
            </div>
          </div>
          <div class="card list">
            <div class="card-head list-head">
              <div><div class="title">Daftar Outlet (40)</div><div class="muted">Klik Lihat untuk fokus</div></div>
              <button class="btn running">Running</button>
            </div>
            <div class="items">
              ${OUTLETS.map((o) => html`<div class="item">
                <div class="who">
                  <span class="dot" style=${styleMap({ background: o.color })}></span>
                  <span class="name">${o.name}</span>
                  <span class="muted">${o.meta}</span>
                </div>
                <div class="side"><span class="muted">occ ${o.occ}%</span><button class="btn">Lihat</button></div>
              </div>`)}
              <div class="item"></div>
            </div>
          </div>
          <div class="card logs">
            <div class="title">Log Singkat</div>
            <div class="log-row">
              <div>${LOG.map((l) => html`<div class="muted">${l}</div>`)}</div>
              <div class="thumb"></div>
            </div>
          </div>
        </aside>
      </main>
      <footer class="footer muted">© Cuk-Mart • Dashboard demo — Mock data</footer>`;
  }
}
